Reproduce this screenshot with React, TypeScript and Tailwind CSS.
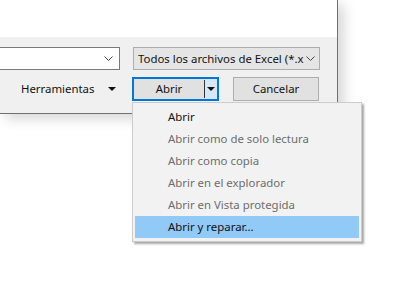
const items = [
  { label: "Abrir", enabled: true },
  { label: "Abrir como de solo lectura", enabled: false },
  { label: "Abrir como copia", enabled: false },
  { label: "Abrir en el explorador", enabled: false },
  { label: "Abrir en Vista protegida", enabled: false },
  { label: "Abrir y reparar...", enabled: true, active: true },
];

function Chevron() {
  return (
    <svg width="9" height="5" viewBox="0 0 9 5" className="shrink-0">
      <path d="M0.5 0.5 L4.5 4.5 L8.5 0.5" fill="none" stroke="#444" strokeWidth="1" />
    </svg>
  );
}

function Caret() {
  return (
    <svg width="8" height="4" viewBox="0 0 8 4" className="shrink-0">
      <path d="M0 0 H8 L4 4 Z" fill="#111" />
    </svg>
  );
}

export default function App() {
  return (
    <div
      className="relative w-[417px] h-[290px] bg-white overflow-hidden text-[11.4px] text-[#111]"
      style={{ fontFamily: '"Noto Sans", "Open Sans", sans-serif' }}
    >
      {/* Dialog */}
      <div className="w-[338px] border-r border-b border-[#707070] shadow-[6px_5px_12px_rgba(0,0,0,0.16)]">
        <div className="h-[37px] bg-white" />
        <div className="h-[76px] bg-[#f0f0f0] pt-[10px] flex flex-col gap-[7px]">
          <div className="flex gap-[13px]">
            <div className="w-[120px] h-[23px] bg-white border border-[#7a7a7a] border-l-0 flex items-center justify-end pr-[6px]">
              <Chevron />
            </div>
            <div className="w-[187px] h-[23px] bg-[#e5e5e5] border border-[#adadad] flex items-center pl-[4px] pr-[4px]">
              <span className="w-[167px] whitespace-nowrap overflow-hidden leading-[16px]">Todos los archivos de Excel (*.x</span>
              <span className="ml-auto flex">
                <Chevron />
              </span>
            </div>
          </div>
          <div className="flex items-center">
            <div className="w-[132px] h-[24px] flex items-center">
              <span className="ml-[21px] leading-none">Herramientas</span>
              <span className="ml-auto mr-[16px] flex">
                <Caret />
              </span>
            </div>
            <div className="w-[87px] h-[24px] border-2 border-[#0078d7] bg-[#e1e1e1] flex">
              <div className="flex-1 flex items-center justify-center leading-none">Abrir</div>
              <div className="w-px my-[1px] bg-[#333]" />
              <div className="w-[12px] bg-[#d6e8f7] flex items-center justify-center">
                <Caret />
              </div>
            </div>
            <div className="ml-[14px] w-[86px] h-[24px] border border-[#adadad] bg-[#e1e1e1] flex items-center justify-center leading-none">
              Cancelar
            </div>
          </div>
        </div>
      </div>

      {/* Split button menu */}
      <div className="absolute left-[132px] top-[102px] w-[230px] bg-[#f2f2f2] border border-[#cccccc] shadow-[2px_2px_2px_rgba(0,0,0,0.35)] p-[2px] py-[3px]">
        {items.map((it) => (
          <div
            key={it.label}
            className={
              "h-[22px] flex items-center pl-[33px] whitespace-nowrap " +
              (it.active ? "bg-[#91c9f7] " : "") +
              (it.enabled ? "text-[#111]" : "text-[#6d6d6d]")
            }
          >
            {it.label}
          </div>
        ))}
      </div>
    </div>
  );
}
